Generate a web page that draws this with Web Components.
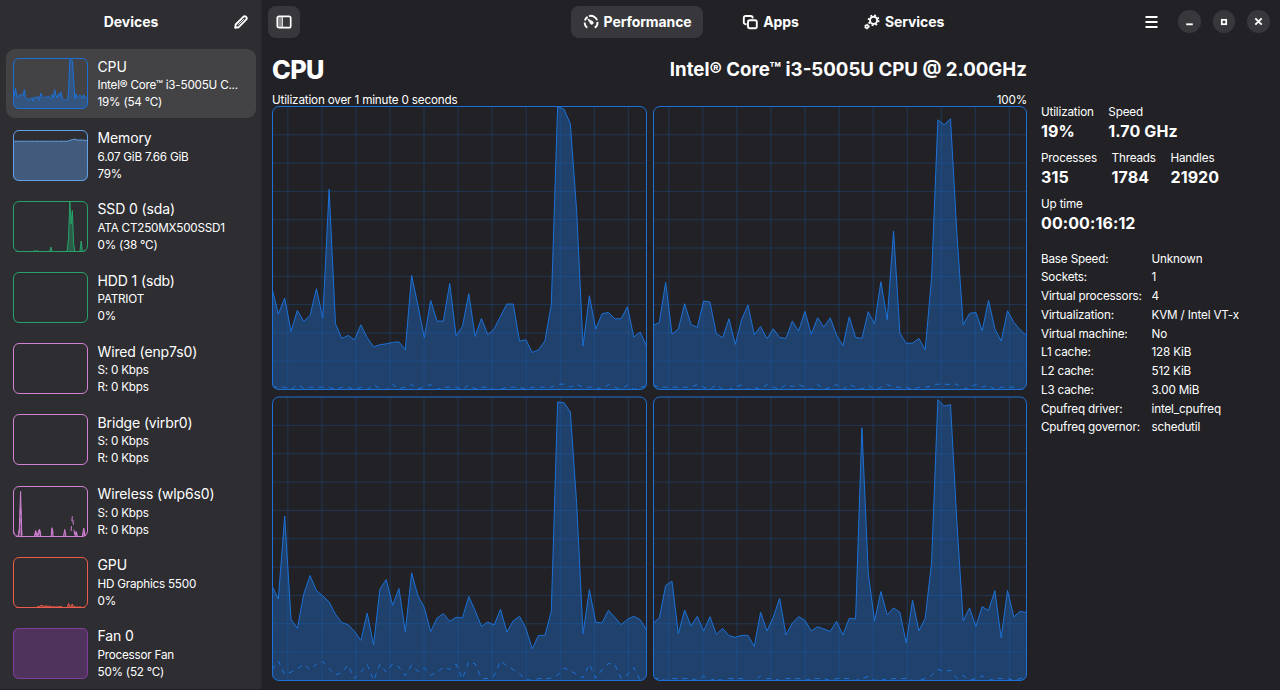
<!DOCTYPE html>
<html lang="en">
<head>
<meta charset="utf-8">
<title>Mission Center</title>
<style>
  html, body {
    margin: 0;
    height: 100%;
    overflow: hidden;
    background: #222226;
  }
</style>
</head>
<body>
<mission-center></mission-center>

<script>
const ICONS = {
  pencil: `<path d="M2.2 13.8l.5-3.3 7.6-7.6a1.95 1.95 0 0 1 2.8 2.8l-7.6 7.6z" fill="none" stroke="currentColor" stroke-width="1.9" stroke-linejoin="round"/><path d="M5.2 10.8l5.6-5.6" stroke="currentColor" stroke-width=".9"/>`,
  sidebar: `<rect x="1.3" y="2.3" width="13.4" height="11.4" rx="1.8" fill="none" stroke="currentColor" stroke-width="1.7"/><rect x="2.2" y="3.2" width="3.6" height="9.8" fill="currentColor" opacity=".4"/><path d="M6.3 3v10.5" stroke="currentColor"/>`,
  gauge: `<path d="M4.2 13.8A6.6 6.6 0 0 1 1.6 8.6M1.9 6.6A6.6 6.6 0 0 1 4.6 2.9M6 2.1A6.6 6.6 0 0 1 14.1 6.2M14.5 7.8A6.6 6.6 0 0 1 11.8 13.8" fill="none" stroke="currentColor" stroke-width="1.9"/><path d="M4.6 4.8L9.1 7.2a1.6 1.6 0 1 1-2 1.9z" fill="currentColor" stroke="currentColor" stroke-width=".7"/>`,
  apps: `<path d="M4.6 10.2H3.6a1.8 1.8 0 0 1-1.8-1.8V3.8A1.8 1.8 0 0 1 3.6 2h5.2a1.8 1.8 0 0 1 1.8 1.8v.8" fill="none" stroke="currentColor" stroke-width="1.9"/><rect x="6" y="6.2" width="8.8" height="8" rx="1.8" fill="none" stroke="currentColor" stroke-width="1.9"/>`,
  gears: `<circle cx="9.6" cy="6.3" r="3.6" fill="none" stroke="currentColor" stroke-width="2"/><circle cx="9.6" cy="6.3" r="5.1" fill="none" stroke="currentColor" stroke-width="1.6" stroke-dasharray="1.9 2.1"/><circle cx="2.9" cy="12.6" r="1.5" fill="none" stroke="currentColor" stroke-width="1.6"/><circle cx="2.9" cy="12.6" r="2.4" fill="none" stroke="currentColor" stroke-width=".8" stroke-dasharray="1.2 1.3"/>`,
  menu: `<path d="M2.5 3h12M2.5 8h12M2.5 13h12" stroke="currentColor" stroke-width="2"/>`,
  minimize: `<path d="M4.5 11h7" stroke="currentColor" stroke-width="2"/>`,
  maximize: `<rect x="5.5" y="5.5" width="5" height="5" fill="none" stroke="currentColor" stroke-width="2"/>`,
  close: `<path d="M4.6 4.6l6.8 6.8M11.4 4.6l-6.8 6.8" stroke="currentColor" stroke-width="2"/>`,
}

// sample heights are in percent of the graph's range, oldest first
const fromRaw = (raw, top, bottom) => raw.map((v) => ((bottom - v) / (bottom - top)) * 100)

const CORES = [
  {
    use: fromRaw([565, 642, 594, 694, 631, 664, 646, 566, 654, 268, 671, 715, 706, 719, 674, 713, 740, 734, 731, 727, 725, 749, 526, 617, 713, 601, 663, 663, 550, 707, 679, 581, 709, 655, 704, 686, 649, 612, 612, 723, 719, 757, 749, 722, 614, 20, 28, 72, 334, 738, 587, 687, 641, 637, 656, 656, 620, 711, 696, 738], 20, 868),
    kernel: fromRaw([861, 861, 861, 868, 853, 864, 861, 861, 861, 861, 868, 861, 861, 868, 861, 868, 853, 866, 868, 853, 866, 861, 853, 867, 859, 853, 868, 861, 861, 861, 868, 853, 866, 861, 861, 868, 868, 861, 861, 861, 868, 861, 861, 861, 861, 852, 852, 861, 852, 861, 861, 861, 868, 853, 861, 867, 855, 868, 861, 859], 20, 868),
  },
  {
    use: fromRaw([676, 667, 547, 702, 687, 611, 673, 682, 603, 606, 701, 713, 656, 733, 658, 615, 704, 679, 716, 686, 712, 715, 663, 693, 634, 703, 653, 681, 653, 705, 737, 650, 712, 715, 635, 672, 545, 659, 393, 699, 730, 729, 715, 749, 536, 60, 75, 57, 400, 674, 640, 637, 692, 601, 686, 723, 632, 667, 689, 707], 20, 868),
    kernel: fromRaw([855, 861, 861, 861, 861, 861, 861, 853, 861, 868, 853, 868, 868, 861, 854, 868, 861, 868, 853, 861, 868, 853, 859, 853, 861, 868, 853, 867, 861, 853, 868, 853, 861, 867, 855, 868, 861, 853, 861, 861, 861, 868, 861, 861, 858, 852, 852, 853, 852, 868, 861, 853, 861, 855, 868, 861, 861, 861, 868, 868], 20, 868),
  },
  {
    lower: true,
    use: fromRaw([580, 619, 371, 680, 707, 605, 549, 594, 610, 628, 665, 690, 696, 716, 743, 661, 757, 590, 561, 638, 588, 718, 541, 610, 645, 717, 676, 663, 686, 674, 676, 612, 654, 701, 688, 697, 650, 718, 685, 671, 707, 768, 728, 728, 656, 30, 32, 60, 334, 723, 591, 689, 691, 653, 674, 696, 680, 671, 681, 712], 15, 863),
    kernel: fromRaw([831, 805, 845, 838, 828, 814, 831, 814, 806, 828, 846, 839, 817, 857, 838, 815, 863, 815, 838, 813, 823, 848, 817, 836, 825, 848, 838, 823, 830, 814, 858, 807, 813, 857, 857, 849, 805, 819, 830, 843, 860, 863, 857, 857, 856, 847, 826, 833, 845, 855, 814, 856, 831, 812, 815, 857, 846, 824, 863, 863], 15, 863),
  },
  {
    lower: true,
    use: fromRaw([692, 676, 579, 566, 723, 652, 700, 671, 715, 672, 725, 707, 729, 734, 728, 728, 761, 659, 715, 674, 617, 727, 692, 672, 683, 715, 702, 709, 716, 686, 727, 677, 679, 107, 542, 685, 597, 667, 646, 659, 751, 623, 715, 677, 512, 23, 42, 38, 388, 685, 646, 701, 642, 654, 594, 736, 594, 673, 656, 660], 15, 863),
    kernel: fromRaw([858, 857, 863, 857, 857, 857, 857, 863, 850, 863, 857, 863, 857, 857, 857, 863, 863, 849, 857, 857, 863, 857, 857, 857, 863, 857, 857, 857, 863, 857, 857, 857, 863, 857, 851, 863, 857, 863, 857, 857, 857, 863, 863, 857, 848, 830, 836, 832, 857, 848, 863, 857, 849, 863, 857, 857, 857, 863, 857, 857], 15, 863),
  },
]

const AVERAGE = CORES[0].use.map((_, i) => CORES.reduce((sum, core) => sum + core.use[i], 0) / CORES.length)
const MEMORY = Array.from({ length: 60 }, (_, i) => (i < 44 ? 78.5 : [79.5, 80, 81, 82, 82.5, 82.5, 82, 81, 81, 81, 81, 81, 80.5, 80.5, 80, 80][i - 44]))
const spikes = (points) => Array.from({ length: 60 }, (_, i) => points[i] || 0)

const DEVICES = [
  { name: "CPU", line1: "Intel® Core™ i3-5005U C...", line2: "19% (54 °C)", color: "#1c71d8", selected: true, use: AVERAGE },
  { name: "Memory", line1: "6.07 GiB 7.66 GiB", line2: "79%", color: "#62a0ea", use: MEMORY },
  { name: "SSD 0 (sda)", line1: "ATA CT250MX500SSD1", line2: "0% (38 °C)", color: "#26a269", use: spikes({ 17: 2, 19: 2, 30: 9, 43: 3, 44: 28, 45: 100, 46: 55, 47: 82, 48: 15, 54: 21, 57: 2 }) },
  { name: "HDD 1 (sdb)", line1: "PATRIOT", line2: "0%", color: "#26a269" },
  { name: "Wired (enp7s0)", line1: "S: 0 Kbps", line2: "R: 0 Kbps", color: "#d281d6" },
  { name: "Bridge (virbr0)", line1: "S: 0 Kbps", line2: "R: 0 Kbps", color: "#d281d6" },
  { name: "Wireless (wlp6s0)", line1: "S: 0 Kbps", line2: "R: 0 Kbps", color: "#d281d6", use: spikes({ 0: 20, 5: 15, 6: 90, 18: 12, 20: 9, 21: 15, 31: 10, 41: 14, 50: 10, 56: 17, 57: 4 }), kernel: spikes({ 6: 60, 18: 8, 21: 17, 31: 22, 46: 10, 47: 42, 48: 20, 50: 9, 56: 14 }) },
  { name: "GPU", line1: "HD Graphics 5500", line2: "0%", color: "#ed5b4b", use: spikes({ 20: 3, 21: 2, 22: 4, 23: 4, 24: 3, 25: 2, 26: 3, 27: 3, 28: 2, 29: 3, 30: 2, 32: 3, 34: 2, 36: 3, 38: 3, 44: 8, 45: 3, 46: 2, 47: 7, 49: 2, 51: 2, 53: 2 }) },
  { name: "Fan 0", line1: "Processor Fan", line2: "50% (52 °C)", color: "#813d9c", use: new Array(60).fill(101) },
]

class AppIcon extends HTMLElement {
  connectedCallback() {
    const size = this.getAttribute("size") || 16
    this.attachShadow({ mode: "open" }).innerHTML = /*html*/ `
<style>
  :host { display: block; flex: none; width: ${size}px; height: ${size}px; }
  svg { display: block; width: 100%; height: 100%; }
</style>
<svg viewBox="0 0 16 16">${ICONS[this.getAttribute("name")]}</svg>`
  }
}
customElements.define("app-icon", AppIcon)

class UsageGraph extends HTMLElement {
  set graph(graph) {
    const { width: w, height: h, color, use, kernel, grid, lower } = graph
    // the lower row starts half a pixel early, so its frame is softer at the top
    const top = lower ? 0 : 0.5
    const bottom = h - 0.5
    const pts = (data) => data.map((v, i) => `${(i * (w - 0.5) / 59).toFixed(2)},${(bottom - (v / 100) * (bottom - top)).toFixed(2)}`).join(" ")

    let lines = ""
    if (grid) {
      for (let x = 15.8; x < w; x += 34.06) lines += `M${x} ${top}V${bottom}`
      for (let i = 1; i < 10; i++) lines += `M0 ${top + (i * (bottom - top)) / 10}H${w}`
    }
    const r = grid ? 6.5 : 5.5
    const root = this.shadowRoot || this.attachShadow({ mode: "open" })
    root.innerHTML = /*html*/ `
<style>
  :host { display: block; flex: none; width: ${w}px; height: ${h}px; }
  svg { display: block; overflow: visible; }
</style>
<svg width="${w}" height="${h}" fill="none" stroke="${color}">
  <clipPath id="frame"><rect x="0" y="0" width="${w}" height="${h}" rx="${r}"/></clipPath>
  <g clip-path="url(#frame)">
    <path d="${lines}" stroke-opacity=".25"/>
    ${use ? `<polygon points="0,${bottom} ${pts(use)} ${w},${bottom}" fill="${color}" fill-opacity=".4" stroke="none"/><polyline points="${pts(use)}"/>` : ""}
    ${kernel ? `<polyline points="${pts(kernel)}" stroke-dasharray="5 5"/>` : ""}
  </g>
  <rect x=".5" y="${top}" width="${w - 1}" height="${bottom - top}" rx="${r}"/>
</svg>`
  }
}
customElements.define("usage-graph", UsageGraph)

class DeviceRow extends HTMLElement {
  set device(device) {
    const root = this.attachShadow({ mode: "open" })
    root.innerHTML = /*html*/ `
<style>
  :host {
    display: flex;
    box-sizing: border-box;
    height: 69.2px;
    margin-bottom: 2px;
    padding: 0 7px;
    gap: 9.5px;
    align-items: center;
    border-radius: 9px;
    background: ${device.selected ? "#434345" : "transparent"};
  }
  .text { padding-top: 1.6px; white-space: nowrap; }
  .name { font-size: 14px; line-height: 18px; letter-spacing: -.13px; }
  .line { font-size: 11.7px; line-height: 17px; letter-spacing: -.22px; }
  .name + .line { margin-top: 1.4px; }
</style>
<usage-graph></usage-graph>
<div class="text">
  <div class="name">${device.name}</div>
  <div class="line">${device.line1}</div>
  <div class="line">${device.line2}</div>
</div>`
    root.querySelector("usage-graph").graph = { ...device, width: 75, height: 51 }
  }
}
customElements.define("device-row", DeviceRow)

class DeviceSidebar extends HTMLElement {
  connectedCallback() {
    const root = this.attachShadow({ mode: "open" })
    root.innerHTML = /*html*/ `
<style>
  :host { display: block; flex: none; box-sizing: border-box; width: 262px; height: 100%; overflow: hidden; border-right: 1px solid #28282c; background: #2e2e32; }
  header { display: flex; height: 43px; align-items: center; padding: 0 12px 0 29px; }
  h2 { flex: 1; margin: 0; text-align: center; font-size: 14px; font-weight: 700; letter-spacing: -.05px; }
  .list { padding: 6.3px 5px 0 6px; }
</style>
<header><h2>Devices</h2><app-icon name="pencil"></app-icon></header>
<div class="list"></div>`
    const list = root.querySelector(".list")
    for (const device of DEVICES) {
      const row = document.createElement("device-row")
      row.device = device
      list.append(row)
    }
  }
}
customElements.define("device-sidebar", DeviceSidebar)

class ViewTab extends HTMLElement {
  connectedCallback() {
    this.attachShadow({ mode: "open" }).innerHTML = /*html*/ `
<style>
  :host {
    display: flex;
    box-sizing: border-box;
    width: 131.5px;
    height: 32px;
    gap: 5px;
    align-items: center;
    justify-content: center;
    border-radius: 8px;
    font-size: 14px;
    font-weight: 700;
    letter-spacing: -.1px;
    white-space: nowrap;
  }
  :host([active]) { background: #38383c; }
</style>
<app-icon name="${this.getAttribute("icon")}"></app-icon>
<slot></slot>`
  }
}
customElements.define("view-tab", ViewTab)

class WindowHeader extends HTMLElement {
  connectedCallback() {
    this.attachShadow({ mode: "open" }).innerHTML = /*html*/ `
<style>
  :host { display: flex; height: 43px; align-items: center; padding: 0 10px 0 6px; }
  .toggle { display: flex; width: 32px; height: 32px; align-items: center; justify-content: center; border-radius: 8px; background: #38383c; }
  .tabs { display: flex; margin-left: 271.3px; gap: 2px; }
  .controls { display: flex; margin-left: auto; align-items: center; gap: 12px; }
  .round { display: flex; width: 22.7px; height: 22.7px; border-radius: 50%; align-items: center; justify-content: center; background: #38383c; }
  .controls > app-icon { margin-right: 7px; }
</style>
<div class="toggle"><app-icon name="sidebar"></app-icon></div>
<div class="tabs">
  <view-tab icon="gauge" active>Performance</view-tab>
  <view-tab icon="apps">Apps</view-tab>
  <view-tab icon="gears">Services</view-tab>
</div>
<div class="controls">
  <app-icon name="menu"></app-icon>
  <div class="round"><app-icon name="minimize" size="15"></app-icon></div>
  <div class="round"><app-icon name="maximize" size="14"></app-icon></div>
  <div class="round"><app-icon name="close" size="15"></app-icon></div>
</div>`
  }
}
customElements.define("window-header", WindowHeader)

class StatValue extends HTMLElement {
  connectedCallback() {
    this.attachShadow({ mode: "open" }).innerHTML = /*html*/ `
<style>
  :host { display: block; }
  .label { padding-top: 1px; font-size: 11.7px; line-height: 17px; letter-spacing: -.17px; }
  .value { font-size: 16px; font-weight: 700; line-height: 20px; letter-spacing: .1px; }
</style>
<div class="label">${this.getAttribute("label")}</div>
<div class="value"><slot></slot></div>`
  }
}
customElements.define("stat-value", StatValue)

class CpuDetails extends HTMLElement {
  connectedCallback() {
    const info = [
      ["Base Speed:", "Unknown"],
      ["Sockets:", "1"],
      ["Virtual processors:", "4"],
      ["Virtualization:", "KVM / Intel VT-x"],
      ["Virtual machine:", "No"],
      ["L1 cache:", "128 KiB"],
      ["L2 cache:", "512 KiB"],
      ["L3 cache:", "3.00 MiB"],
      ["Cpufreq driver:", "intel_cpufreq"],
      ["Cpufreq governor:", "schedutil"],
    ]
    this.attachShadow({ mode: "open" }).innerHTML = /*html*/ `
<style>
  :host { display: block; padding-top: 60px; white-space: nowrap; }
  .stats { display: flex; height: 46px; gap: 14.6px; }
  dl {
    display: grid;
    grid-template-columns: 110.5px 1fr;
    margin: 8.6px 0 0;
    font-size: 11.7px;
    line-height: 18.75px;
    letter-spacing: -.17px;
  }
  dd { margin: 0; }
</style>
<div class="stats">
  <stat-value label="Utilization">19%</stat-value>
  <stat-value label="Speed">1.70 GHz</stat-value>
</div>
<div class="stats">
  <stat-value label="Processes">315</stat-value>
  <stat-value label="Threads">1784</stat-value>
  <stat-value label="Handles">21920</stat-value>
</div>
<div class="stats"><stat-value label="Up time">00:00:16:12</stat-value></div>
<dl>${info.map(([k, v]) => `<dt>${k}</dt><dd>${v}</dd>`).join("")}</dl>`
  }
}
customElements.define("cpu-details", CpuDetails)

class CpuPage extends HTMLElement {
  connectedCallback() {
    const root = this.attachShadow({ mode: "open" })
    root.innerHTML = /*html*/ `
<style>
  :host { display: flex; gap: 14px; padding-left: 10px; }
  .main { width: 755px; flex: none; }
  .title { display: flex; height: 48px; align-items: center; justify-content: space-between; padding-top: 2px; }
  h1 { margin: 0; font-size: 25.3px; font-weight: 800; letter-spacing: -.6px; }
  h2 { margin: 0; font-size: 18.67px; font-weight: 700; }
  .caption { display: flex; height: 13px; justify-content: space-between; font-size: 11.7px; line-height: 14px; letter-spacing: -.18px; }
  .graphs { display: grid; grid-template-columns: 375px 374px; gap: 7px 6px; }
</style>
<div class="main">
  <div class="title"><h1>CPU</h1><h2>Intel® Core™ i3-5005U CPU @ 2.00GHz</h2></div>
  <div class="caption"><span>Utilization over 1 minute 0 seconds</span><span>100%</span></div>
  <div class="graphs"></div>
</div>
<cpu-details></cpu-details>`
    const graphs = root.querySelector(".graphs")
    CORES.forEach((core, i) => {
      const graph = document.createElement("usage-graph")
      graph.graph = { ...core, color: "#1c71d8", grid: true, width: i % 2 ? 374 : 375, height: 284 }
      graphs.append(graph)
    })
  }
}
customElements.define("cpu-page", CpuPage)

class MissionCenter extends HTMLElement {
  connectedCallback() {
    this.attachShadow({ mode: "open" }).innerHTML = /*html*/ `
<style>
  :host {
    display: flex;
    box-sizing: border-box;
    width: 1280px;
    height: 690px;
    overflow: hidden;
    border-bottom: 1px solid #231c24;
    color: #fff;
    background: #222226;
    font-family: Inter, "Noto Sans", sans-serif;
  }
  main { flex: 1; min-width: 0; }
</style>
<device-sidebar></device-sidebar>
<main>
  <window-header></window-header>
  <cpu-page></cpu-page>
</main>`
  }
}
customElements.define("mission-center", MissionCenter)
</script>
</body>
</html>
